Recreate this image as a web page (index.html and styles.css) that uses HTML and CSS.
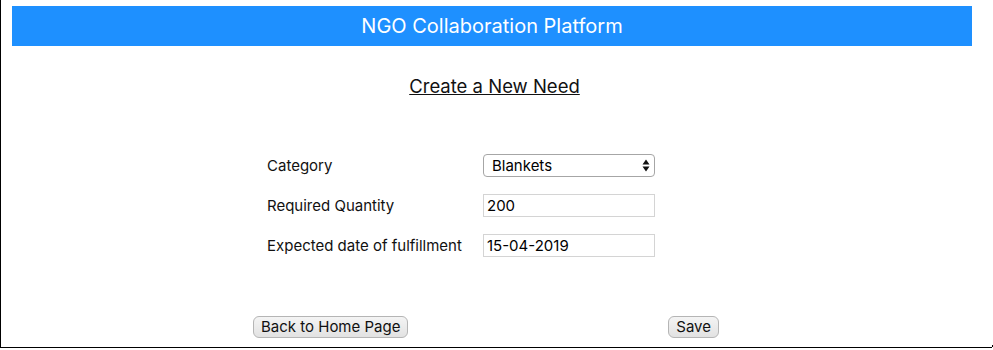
FILE: index.html
```html
<!DOCTYPE html>
<html lang="en">
<head>
    <meta charset="UTF-8">
    <title>Create a New Need</title>
    <link rel="stylesheet" href="styles.css">
</head>
<body>
    <div class="page">
        <div class="header">NGO Collaboration Platform</div>
        <h2 class="title">Create a New Need</h2>

        <form class="need-form">
            <label for="category">Category</label>
            <div class="select-box">
                <select id="category">
                    <option>Blankets</option>
                    <option>Food</option>
                    <option>Clothes</option>
                </select>
                <svg class="arrows" width="8" height="13" viewBox="0 0 8 13">
                    <path d="M4 0.5 L7.5 5.5 L0.5 5.5 Z M4 12.5 L7.5 7.5 L0.5 7.5 Z" fill="#111"/>
                </svg>
            </div>

            <label for="qty">Required Quantity</label>
            <input type="text" id="qty" value="200">

            <label for="date">Expected date of fulfillment</label>
            <input type="text" id="date" value="15-04-2019">
        </form>

        <div class="actions">
            <button type="button">Back to Home Page</button>
            <button type="button">Save</button>
        </div>
        <span class="corner"></span>
    </div>
</body>
</html>
```

FILE: styles.css
```css
body {
    margin: 0;
    font-family: Inter, "Liberation Sans", Arial, sans-serif;
    color: #111;
    background: #fff;
}

.page {
    position: relative;
    width: 991px;
    height: 341px;
    border-left: 1px solid #000;
    border-bottom: 1px solid #000;
    padding-top: 6px;
}

.corner {
    position: absolute;
    right: -1px;
    bottom: 0;
    width: 1px;
    height: 2px;
    background: #000;
}

.header {
    margin: 0 20px 0 11px;
    height: 40px;
    line-height: 40px;
    background: #1e90ff;
    color: #fff;
    text-align: center;
    font-size: 20px;
}

.title {
    margin: 28px 0 0;
    text-align: center;
    font-size: 18.5px;
    font-weight: normal;
    text-decoration: underline;
    line-height: 24px;
    padding-right: 4px;
}

.need-form {
    display: grid;
    grid-template-columns: 216px 172px;
    grid-auto-rows: 23px;
    row-gap: 17px;
    align-items: center;
    margin: 56px 0 0 266px;
    font-size: 15px;
}

.need-form input {
    width: 172px;
    height: 23px;
    box-sizing: border-box;
    border: 1px solid #d4d4d4;
    padding: 0 3px;
    font-family: inherit;
    font-size: 15px;
    color: #000;
    outline: none;
}

.select-box {
    position: relative;
    width: 172px;
    height: 23px;
}

.select-box select {
    appearance: none;
    -webkit-appearance: none;
    width: 172px;
    height: 23px;
    border: 1px solid #a6a6a6;
    border-radius: 4px;
    background: #fff;
    padding: 0 8px;
    font-family: inherit;
    font-size: 15px;
    color: #000;
}

.select-box .arrows {
    position: absolute;
    right: 5px;
    top: 5px;
    pointer-events: none;
}

.actions {
    display: flex;
    justify-content: space-between;
    width: 466px;
    margin: 59px 0 0 252px;
}

.actions button {
    height: 22px;
    padding: 0 7px;
    border: 1px solid #b5b5b5;
    border-radius: 6px;
    background: linear-gradient(#f4f4f4, #e2e2e2);
    font-family: inherit;
    font-size: 15px;
    color: #111;
    line-height: 20px;
}
```
